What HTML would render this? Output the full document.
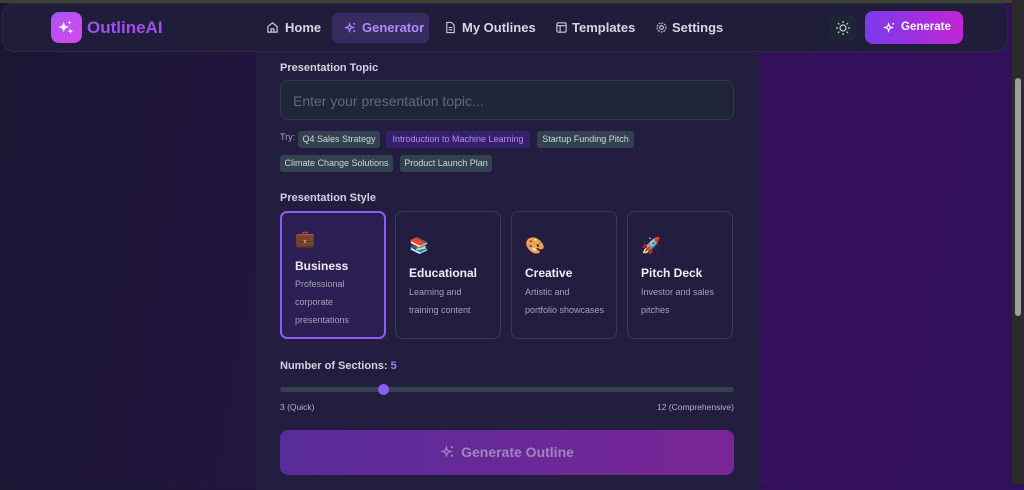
<!DOCTYPE html>
<html><head><meta charset="utf-8"><style>
*{box-sizing:border-box;margin:0;padding:0}
body{width:1024px;height:484px;overflow:hidden;font-family:"Liberation Sans","DejaVu Sans",sans-serif;background:linear-gradient(100deg,#1b1634 0%,#221540 30%,#35105c 75%,#32105a 100%);position:relative;color:#e8e6f0}
.strip{position:absolute;top:0;left:0;width:1012px;height:3px;background:#3b4230}
.sb{position:absolute;right:0;top:0;width:12px;height:484px;background:#2b2b2b}
.sb i{position:absolute;left:3px;top:78px;width:6px;height:238px;background:#9e9e9e;border-radius:3px}
.panel{position:absolute;left:256px;top:40px;width:503px;height:450px;background:#231d40}
nav{position:absolute;left:2px;top:3px;width:1006px;height:49px;background:#1f1d39;border-radius:12px;border:1px solid #2a2946}
.logo{position:absolute;left:51px;top:12px;width:31px;height:31px;border-radius:8px;background:linear-gradient(135deg,#a855f7,#d946ef)}
.brand{position:absolute;left:87px;top:18px;font-size:17px;font-weight:bold;color:#a24ef0}
.ni{position:absolute;top:13px;height:30px;line-height:30px;font-size:13px;font-weight:bold;color:#d8d6e4;white-space:nowrap}
.ni svg{position:absolute;top:8px}
.act{background:#372d63;border-radius:6px;color:#b08cf5}
.sun{position:absolute;left:830px;top:15px;width:26px;height:26px;border-radius:5px;background:#1e2536}
.gbtn{position:absolute;left:865px;top:11px;width:98px;height:33px;border-radius:8px;background:linear-gradient(90deg,#7c3aed,#c026d3);font-size:11.5px;font-weight:bold;color:#fff;line-height:33px;padding-left:36px}
.gbtn svg{position:absolute;left:18px;top:10px}
.lbl{position:absolute;left:280px;font-size:11px;font-weight:bold;color:#d4d2e0}
.inp{position:absolute;left:280px;top:80px;width:454px;height:40px;border:1px solid #313a4d;border-radius:8px;background:#212538;font-size:14px;color:#5e6a7d;padding:12px 12px}
.try{position:absolute;left:280px;top:132px;font-size:9px;color:#aab}
.chip{position:absolute;height:17px;line-height:17px;font-size:9px;text-align:center;background:#33424f;color:#cfd6df;border-radius:3px;white-space:nowrap;overflow:hidden}
.chip.p{background:#35206b;color:#b48af5}
.card{position:absolute;top:211px;width:106px;height:128px;border:1px solid #343c50;border-radius:7px}
.card.sel{border:2px solid #8b5cf6;background:#2b1f54}
.card .e{position:absolute;left:13px;font-size:16px}
.card .t{position:absolute;left:13px;font-size:12px;font-weight:bold;color:#f0eef8}
.card .d{position:absolute;left:13px;font-size:9px;color:#a4a3b5;line-height:18px;white-space:nowrap}
.track{position:absolute;left:280px;top:387px;width:454px;height:5px;border-radius:3px;background:#36424f}
.thumb{position:absolute;left:378px;top:384px;width:11px;height:11px;border-radius:50%;background:#8b5cf6}
.sm{position:absolute;top:402px;font-size:8.5px;color:#b3b3c0}
.big{position:absolute;left:280px;top:430px;width:454px;height:45px;border-radius:8px;background:linear-gradient(90deg,#582c9a,#7a2596);font-size:14px;font-weight:bold;color:#9e86bd;text-align:center;line-height:45px}
</style></head><body>
<div class="strip"></div>
<div class="panel"></div>
<nav></nav>
<div class="logo"><svg width="31" height="31" viewBox="0 0 32 32"><path d="M13 10l1.5 4 4 1.5-4 1.5-1.5 4-1.5-4-4-1.5 4-1.5z M20 17l.8 2 2 .8-2 .8-.8 2-.8-2-2-.8 2-.8z M19 9l.6 1.4 1.4.6-1.4.6-.6 1.4-.6-1.4-1.4-.6 1.4-.6z" fill="#fff"/></svg></div>
<div class="brand">OutlineAI</div>
<div class="ni" style="left:266px;padding-left:19px"><svg style="left:0" width="13" height="13" viewBox="0 0 14 14" fill="none" stroke="#ccc" stroke-width="1.3"><path d="M2 6l5-4 5 4v6H2z M5.5 12V8.5h3V12"/></svg>Home</div>
<div class="ni act" style="left:332px;width:97px;padding-left:30px"><svg style="left:12px" width="13" height="13" viewBox="0 0 14 14" fill="none" stroke="#b08cf5" stroke-width="1.2"><path d="M6 3l1 3 3 1-3 1-1 3-1-3-3-1 3-1z M11 2v2M10 3h2M11 10v2M10 11h2"/></svg>Generator</div>
<div class="ni" style="left:444px;padding-left:18px"><svg style="left:0" width="13" height="13" viewBox="0 0 14 14" fill="none" stroke="#ccc" stroke-width="1.2"><path d="M3 1.5h5l3 3v8H3z M5 7h4M5 9.5h4"/></svg>My Outlines</div>
<div class="ni" style="left:555px;padding-left:17px"><svg style="left:0" width="13" height="13" viewBox="0 0 14 14" fill="none" stroke="#ccc" stroke-width="1.2"><rect x="2" y="2" width="10" height="10" rx="1.5"/><path d="M2 5h10M5.5 5v7"/></svg>Templates</div>
<div class="ni" style="left:655px;padding-left:17px"><svg style="left:0" width="13" height="13" viewBox="0 0 14 14" fill="none" stroke="#ccc" stroke-width="1.2"><circle cx="7" cy="7" r="2"/><circle cx="7" cy="7" r="4.8" stroke-dasharray="2 1.2"/></svg>Settings</div>
<div class="sun"><svg width="26" height="26" viewBox="0 0 26 26" fill="none" stroke="#ccc" stroke-width="1.2"><circle cx="13" cy="13" r="3"/><path d="M13 6v2M13 18v2M6 13h2M18 13h2M8 8l1.4 1.4M16.6 16.6L18 18M8 18l1.4-1.4M16.6 9.4L18 8"/></svg></div>
<div class="gbtn"><svg width="13" height="13" viewBox="0 0 14 14" fill="none" stroke="#fff" stroke-width="1.2"><path d="M6 3l1 3 3 1-3 1-1 3-1-3-3-1 3-1z M11 2v2M10 3h2"/></svg>Generate</div>

<div class="lbl" style="top:62px">Presentation Topic</div>
<div class="inp">Enter your presentation topic...</div>
<div class="try">Try:</div>
<div class="chip" style="left:298px;top:131px;width:82px">Q4 Sales Strategy</div>
<div class="chip p" style="left:386px;top:131px;width:144px">Introduction to Machine Learning</div>
<div class="chip" style="left:537px;top:131px;width:97px">Startup Funding Pitch</div>
<div class="chip" style="left:280px;top:155px;width:113px">Climate Change Solutions</div>
<div class="chip" style="left:400px;top:155px;width:92px">Product Launch Plan</div>

<div class="lbl" style="top:192px">Presentation Style</div>
<div class="card sel" style="left:280px"><span class="e" style="top:16px">💼</span><span class="t" style="top:46px">Business</span><div class="d" style="top:62px">Professional<br>corporate<br>presentations</div></div>
<div class="card" style="left:395px"><span class="e" style="top:24px">📚</span><span class="t" style="top:54px">Educational</span><div class="d" style="top:71px">Learning and<br>training content</div></div>
<div class="card" style="left:511px"><span class="e" style="top:24px">🎨</span><span class="t" style="top:54px">Creative</span><div class="d" style="top:71px">Artistic and<br>portfolio showcases</div></div>
<div class="card" style="left:627px"><span class="e" style="top:24px">🚀</span><span class="t" style="top:54px">Pitch Deck</span><div class="d" style="top:71px">Investor and sales<br>pitches</div></div>

<div class="lbl" style="top:360px">Number of Sections: <span style="color:#a27cf7">5</span></div>
<div class="track"></div><div class="thumb"></div>
<div class="sm" style="left:280px">3 (Quick)</div>
<div class="sm" style="right:290px">12 (Comprehensive)</div>
<div class="big"><svg width="15" height="15" viewBox="0 0 14 14" fill="none" stroke="#9e86bd" stroke-width="1.2" style="vertical-align:-2px;margin-right:6px"><path d="M6 3l1 3 3 1-3 1-1 3-1-3-3-1 3-1z M11 2v2M10 3h2M11 10v2M10 11h2"/></svg>Generate Outline</div>
<div class="sb"><i></i></div>
</body></html>
